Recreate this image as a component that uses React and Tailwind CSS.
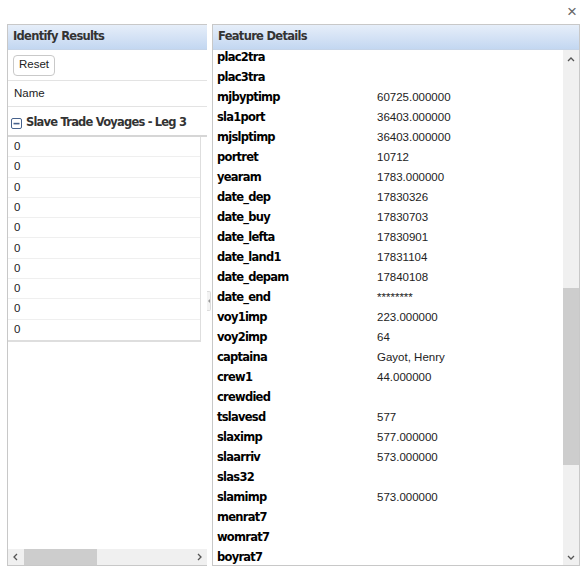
import React from "react";

const details = [
  ["plac2tra", ""],
  ["plac3tra", ""],
  ["mjbyptimp", "60725.000000"],
  ["sla1port", "36403.000000"],
  ["mjslptimp", "36403.000000"],
  ["portret", "10712"],
  ["yearam", "1783.000000"],
  ["date_dep", "17830326"],
  ["date_buy", "17830703"],
  ["date_lefta", "17830901"],
  ["date_land1", "17831104"],
  ["date_depam", "17840108"],
  ["date_end", "********"],
  ["voy1imp", "223.000000"],
  ["voy2imp", "64"],
  ["captaina", "Gayot, Henry"],
  ["crew1", "44.000000"],
  ["crewdied", ""],
  ["tslavesd", "577"],
  ["slaximp", "577.000000"],
  ["slaarriv", "573.000000"],
  ["slas32", ""],
  ["slamimp", "573.000000"],
  ["menrat7", ""],
  ["womrat7", ""],
  ["boyrat7", ""],
];

const tahoma = { fontFamily: "Tahoma, 'DejaVu Sans', sans-serif" };

function PanelHeader({ children }) {
  return (
    <div
      className="flex h-[25px] shrink-0 items-center border-b border-[#c5d4e8] bg-gradient-to-b from-[#e6eef9] to-[#c3d7f1] px-[5px] text-[11.5px] font-bold tracking-[-0.7px] text-[#333]"
      style={tahoma}
    >
      {children}
    </div>
  );
}

function Chevron({ dir }) {
  const d = {
    up: "M2 6 L5 3 L8 6",
    down: "M2 4 L5 7 L8 4",
    left: "M6 2 L3 5 L6 8",
    right: "M4 2 L7 5 L4 8",
  }[dir];
  return (
    <svg width="10" height="10" viewBox="0 0 10 10">
      <path d={d} fill="none" stroke="#555" strokeWidth="1.3" />
    </svg>
  );
}

export default function App() {
  return (
    <div className="relative h-[572px] w-[585px] bg-white" style={{ fontFamily: "'Liberation Sans', Arial, sans-serif" }}>
      <div className="absolute right-[8px] top-[3px] text-[17px] leading-none text-[#666]">×</div>

      <div className="flex h-full pb-[6px] pl-[7px] pr-[5px] pt-[24px]">
        {/* left panel */}
        <div className="flex w-[200px] flex-col border-b border-l border-t border-[#c8c8c8]">
          <PanelHeader>Identify Results</PanelHeader>
          <div className="flex-1 overflow-hidden">
            <div className="flex h-[31px] items-center border-b border-[#e3e3e3] pl-[5px]">
              <button className="h-[21px] rounded-[4px] border border-[#c9c9c9] bg-white px-[5px] text-[11.5px] text-[#222]">
                Reset
              </button>
            </div>
            <div className="flex h-[26px] items-center border-b border-[#e3e3e3] pl-[6px] text-[11.5px] text-[#222]">
              Name
            </div>
            <div
              className="flex h-[30px] items-center gap-[4px] whitespace-nowrap border-b-2 border-[#d6d6d6] pl-[3px] pt-[4px] text-[11.5px] font-bold tracking-[-0.8px] text-[#333]"
              style={tahoma}
            >
              <svg width="11" height="11" viewBox="0 0 11 11" className="shrink-0">
                <rect x="0.5" y="0.5" width="10" height="10" rx="1.5" fill="#fff" stroke="#46618c" />
                <rect x="2.5" y="4.8" width="6" height="1.6" fill="#46618c" />
              </svg>
              <span>Slave Trade Voyages - Leg 3</span>
            </div>
            <div className="w-[193px] border-b-2 border-r border-[#dedede]">
              {Array.from({ length: 10 }).map((_, i) => (
                <div key={i} className="flex h-[20.3px] items-center border-b border-[#efefef] pl-[6px] text-[11.5px] text-[#222] last:border-b-0">
                  0
                </div>
              ))}
            </div>
          </div>
          <div className="flex h-[16px] shrink-0 items-center bg-[#f0f0f0]">
            <div className="flex w-[16px] justify-center">
              <Chevron dir="left" />
            </div>
            <div className="h-full w-[73px] bg-[#cdcdcd]" />
            <div className="flex-1" />
            <div className="flex w-[16px] justify-center">
              <Chevron dir="right" />
            </div>
          </div>
        </div>

        {/* splitter */}
        <div className="flex w-[5px] flex-col justify-center pt-[12px]">
          <div className="flex h-[20px] w-[4px] items-center justify-center rounded-r-[2px] border border-l-0 border-[#dcdcdc] bg-[#f3f3f3]">
            <div className="h-0 w-0 border-y-[2px] border-r-[2px] border-y-transparent border-r-[#999]" />
          </div>
        </div>

        {/* right panel */}
        <div className="flex flex-1 flex-col border border-[#c8c8c8]">
          <PanelHeader>Feature Details</PanelHeader>
          <div className="flex flex-1 overflow-hidden">
            <div className="flex-1 overflow-hidden pl-[4px]">
              <div className="-mt-[2px]">
                {details.map(([k, v]) => (
                  <div key={k} className="flex h-[20px] items-center">
                    <div className="w-[160px] text-[11.5px] font-bold tracking-[-0.75px] text-black" style={tahoma}>
                      {k}
                    </div>
                    <div className="text-[11.5px] text-[#222]">{v}</div>
                  </div>
                ))}
              </div>
            </div>
            <div className="flex w-[16px] flex-col bg-[#f0f0f0]">
              <div className="flex h-[17px] items-center justify-center pt-[2px]">
                <Chevron dir="up" />
              </div>
              <div className="h-[221px]" />
              <div className="h-[177px] bg-[#cdcdcd]" />
              <div className="flex-1" />
              <div className="flex h-[17px] items-center justify-center">
                <Chevron dir="down" />
              </div>
            </div>
          </div>
        </div>
      </div>
    </div>
  );
}
